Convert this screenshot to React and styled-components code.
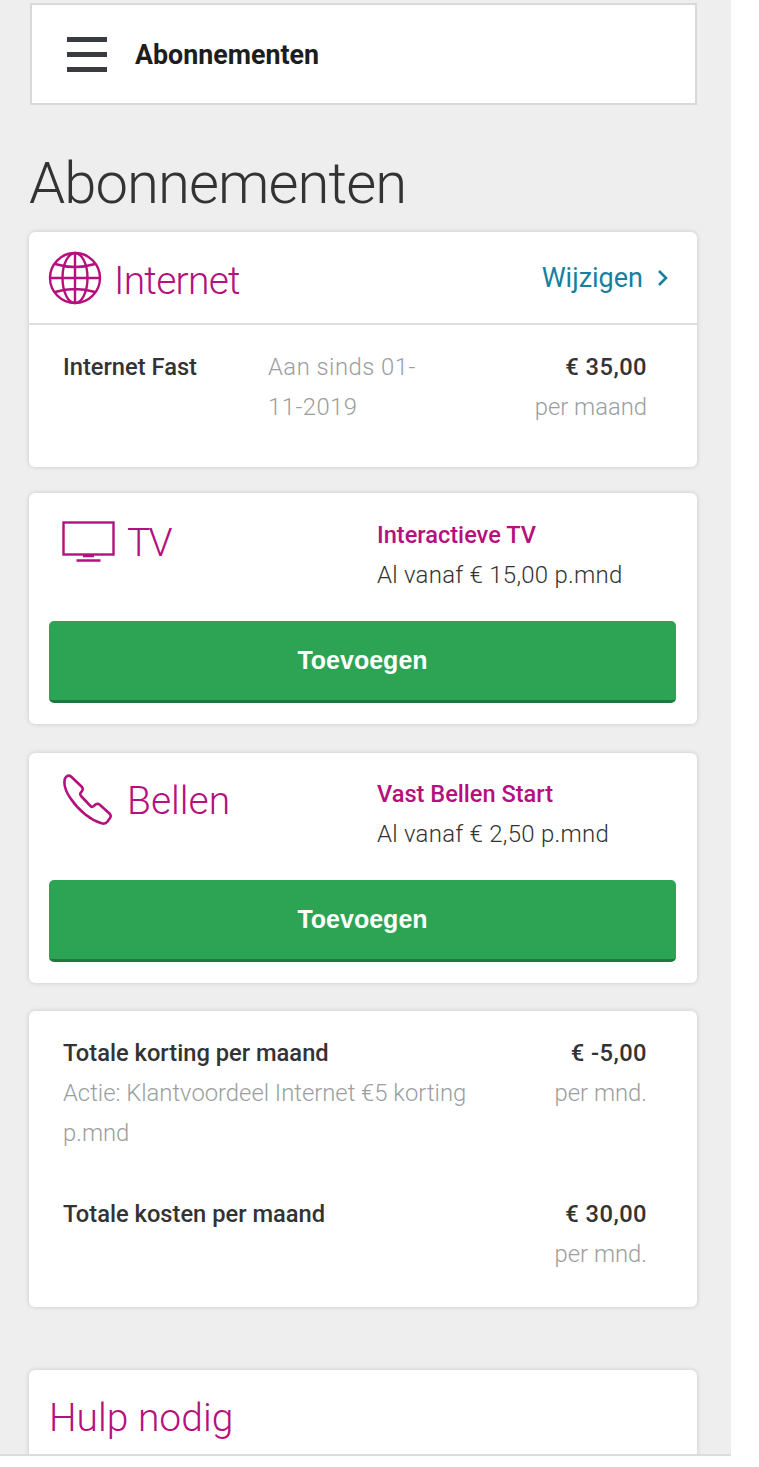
import styled, { createGlobalStyle } from 'styled-components';

const GlobalStyle = createGlobalStyle`
  html, body {
    margin: 0;
    padding: 0;
    background: #fff;
  }
  * {
    box-sizing: border-box;
  }
`;

const Page = styled.div`
  width: 731px;
  height: 1456px;
  overflow: hidden;
  background: #eeeeee;
  border-bottom: 2px solid #dcdcdc;
  padding: 3px 34px 0 29px;
  font-family: "Roboto", "Liberation Sans", sans-serif;
`;

const NavBar = styled.div`
  display: flex;
  align-items: center;
  gap: 28px;
  height: 102px;
  margin: 0 0 0 1px;
  padding-left: 35px;
  background: #fff;
  border: 2px solid #d9d9d9;
`;

const NavTitle = styled.span`
  padding-top: 2px;
  font-weight: 700;
  font-size: 26.8px;
  color: #1d1d1d;
`;

const Burger = styled.div`
  display: flex;
  flex-direction: column;
  gap: 10px;
  width: 40px;
  span {
    display: block;
    height: 5px;
    background: #383c40;
  }
`;

const PageTitle = styled.h1`
  margin: 43px 0 14px;
  height: 70px;
  font-weight: 300;
  font-size: 58px;
  line-height: 70px;
  letter-spacing: -0.95px;
  color: #333;
`;

const Card = styled.section`
  background: #fff;
  border-radius: 6px;
  box-shadow: 0 0 5px rgba(0, 0, 0, 0.16);
  margin-bottom: ${(p) => p.$gap || 0}px;
  height: ${(p) => p.$height}px;
`;

const CardHeader = styled.div`
  display: flex;
  align-items: center;
  justify-content: space-between;
  height: 93px;
  padding: 0 28px 0 19px;
  border-bottom: 2px solid #dedede;
`;

const IconTitle = styled.div`
  display: flex;
  align-items: center;
  align-self: start;
  gap: ${(p) => p.$gap || 13}px;
  margin-top: ${(p) => p.$top || 0}px;
  color: #b5107e;
`;

const ServiceName = styled.span`
  margin-top: ${(p) => p.$nudge || 0}px;
  font-weight: 300;
  font-size: 39px;
  line-height: 48px;
  letter-spacing: ${(p) => p.$spacing || 0}px;
  color: #b5107e;
`;

const ChangeLink = styled.a`
  display: flex;
  align-items: center;
  gap: 14px;
  font-size: 27px;
  color: #17809f;
`;

const InternetRow = styled.div`
  display: grid;
  grid-template-columns: 205px 165px 1fr;
  padding: 22px 50px 0 34px;
`;

const Strong = styled.div`
  font-weight: 500;
  font-size: 23.7px;
  line-height: 40px;
  color: #333;
  letter-spacing: ${(p) => (p.$right ? 0.45 : 0)}px;
  text-align: ${(p) => (p.$right ? 'right' : 'left')};
`;

const Muted = styled.div`
  font-weight: 300;
  font-size: 23.8px;
  line-height: 40px;
  color: #9a9ea0;
  letter-spacing: ${(p) => p.$spacing || 0}px;
  text-align: ${(p) => (p.$right ? 'right' : 'left')};
`;

const OfferTop = styled.div`
  display: grid;
  grid-template-columns: 1fr 320px;
  height: ${(p) => p.$height}px;
  padding: ${(p) => p.$top}px 0 0 33px;
`;

const OfferName = styled.div`
  font-weight: 500;
  font-size: 23.6px;
  line-height: 40px;
  color: #b5107e;
`;

const OfferPrice = styled.div`
  font-weight: 300;
  font-size: 24px;
  line-height: 40px;
  letter-spacing: 0.25px;
  color: #333;
`;

const AddButton = styled.button`
  display: block;
  width: 627px;
  height: 82px;
  margin-left: 20px;
  border: 0;
  border-bottom: 3px solid #1d7a3f;
  border-radius: 5px;
  background: #2ca454;
  color: #fff;
  font-family: "Liberation Sans", sans-serif;
  font-weight: 700;
  font-size: 25px;
`;

const TotalsCard = styled(Card)`
  padding-top: 22px;
`;

const TotalRow = styled.div`
  display: grid;
  grid-template-columns: 1fr 150px;
  column-gap: 20px;
  padding: 0 50px 0 34px;
  margin-bottom: ${(p) => p.$gap || 0}px;
`;

const HelpTitle = styled.h2`
  margin: 0;
  padding: 23px 0 0 20px;
  font-weight: 300;
  font-size: 39px;
  line-height: 50px;
  color: #b5107e;
`;

const GlobeIcon = () => (
  <svg width="54" height="54" viewBox="0 0 54 54" fill="none" stroke="currentColor" strokeWidth="2.4">
    <circle cx="27" cy="27" r="25" />
    <ellipse cx="27" cy="27" rx="12.5" ry="25" />
    <path d="M27 2v50M2 27h50M7 13Q27 19 47 13M7 41Q27 35 47 41" />
  </svg>
);

const TvIcon = () => (
  <svg width="54" height="42" viewBox="0 0 54 42" fill="none" stroke="currentColor" strokeWidth="2.4">
    <rect x="1.5" y="1.5" width="50" height="32" />
    <path d="M21 35h11M14.5 39.5h24" strokeWidth="2.6" />
  </svg>
);

const PhoneIcon = () => (
  <svg width="52" height="52" viewBox="0 0 52 52" fill="none" stroke="currentColor" strokeWidth="2.6" strokeLinejoin="round">
    <path d="M3 4.5C4.5 1.5 7 1 9 2.5L19.5 12.5C21 14 21 15.5 20 17L18.5 19C18 20 18.2 21 19 22L28.5 32C29.5 33 30.5 33 31.5 32.3L33.5 30.5C35 29.5 36 29.5 37.5 30.5L47.5 39.5C49 41 49 42.5 48 44L45.5 47.5C44 49.5 42 50 39.5 49.3C29 46 17 37 9 25C4 18 1 11 3 4.5Z" />
  </svg>
);

const ChevronIcon = () => (
  <svg width="12" height="18" viewBox="0 0 12 18" fill="none" stroke="currentColor" strokeWidth="2.6">
    <path d="M2 2l7 7-7 7" />
  </svg>
);

const App = () => (
  <>
    <GlobalStyle />
    <Page>
      <NavBar>
        <Burger>
          <span />
          <span />
          <span />
        </Burger>
        <NavTitle>Abonnementen</NavTitle>
      </NavBar>
      <PageTitle>Abonnementen</PageTitle>

      <Card $height={235} $gap={26}>
        <CardHeader>
          <IconTitle $top={19} $gap={12}>
            <GlobeIcon />
            <ServiceName $nudge={5} $spacing={-0.75}>Internet</ServiceName>
          </IconTitle>
          <ChangeLink>
            Wijzigen
            <ChevronIcon />
          </ChangeLink>
        </CardHeader>
        <InternetRow>
          <Strong>Internet Fast</Strong>
          <Muted $spacing={0.5}>Aan sinds 01-11-2019</Muted>
          <div>
            <Strong $right>€ 35,00</Strong>
            <Muted $right>per maand</Muted>
          </div>
        </InternetRow>
      </Card>

      <Card $height={231} $gap={29}>
        <OfferTop $top={22} $height={128}>
          <IconTitle $top={2} $gap={11}>
            <TvIcon />
            <ServiceName $nudge={2} $spacing={-2}>TV</ServiceName>
          </IconTitle>
          <div>
            <OfferName>Interactieve TV</OfferName>
            <OfferPrice>Al vanaf € 15,00 p.mnd</OfferPrice>
          </div>
        </OfferTop>
        <AddButton>Toevoegen</AddButton>
      </Card>

      <Card $height={230} $gap={28}>
        <OfferTop $top={21} $height={127}>
          <IconTitle>
            <PhoneIcon />
            <ServiceName $nudge={2}>Bellen</ServiceName>
          </IconTitle>
          <div>
            <OfferName>Vast Bellen Start</OfferName>
            <OfferPrice>Al vanaf € 2,50 p.mnd</OfferPrice>
          </div>
        </OfferTop>
        <AddButton>Toevoegen</AddButton>
      </Card>

      <TotalsCard $height={296} $gap={63}>
        <TotalRow $gap={41}>
          <div>
            <Strong>Totale korting per maand</Strong>
            <Muted>Actie: Klantvoordeel Internet €5 korting p.mnd</Muted>
          </div>
          <div>
            <Strong $right>€ -5,00</Strong>
            <Muted $right>per mnd.</Muted>
          </div>
        </TotalRow>
        <TotalRow>
          <Strong>Totale kosten per maand</Strong>
          <div>
            <Strong $right>€ 30,00</Strong>
            <Muted $right>per mnd.</Muted>
          </div>
        </TotalRow>
      </TotalsCard>

      <Card $height={120}>
        <HelpTitle>Hulp nodig</HelpTitle>
      </Card>
    </Page>
  </>
);

export default App;
